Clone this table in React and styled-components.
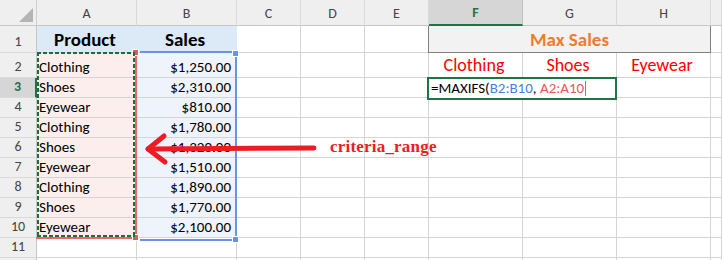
import styled, { createGlobalStyle } from "styled-components";

const GREEN = "#217346";
const GRID = "#d4d4d4";
const FONT = `Carlito, Calibri, Lato, "Liberation Sans", sans-serif`;

const GlobalStyle = createGlobalStyle`
  html, body { margin: 0; padding: 0; background: #fff; }
  body { font-family: ${FONT}; }
`;

const columns = ["A", "B", "C", "D", "E", "F", "G", "H", ""];

const data = [
  ["Clothing", "$1,250.00"],
  ["Shoes", "$2,310.00"],
  ["Eyewear", "$810.00"],
  ["Clothing", "$1,780.00"],
  ["Shoes", "$1,320.00"],
  ["Eyewear", "$1,510.00"],
  ["Clothing", "$1,890.00"],
  ["Shoes", "$1,770.00"],
  ["Eyewear", "$2,100.00"],
];

const App = () => (
  <>
    <GlobalStyle />
    <Sheet>
      <Corner>
        <CornerMark />
      </Corner>
      {columns.map((c, i) => (
        <ColHead key={i} selected={c === "F"}>
          {c}
        </ColHead>
      ))}

      {/* row 1 */}
      <RowHead>1</RowHead>
      <Cell fill="#dce9f6" bold size={19} align="center">
        Product
      </Cell>
      <Cell fill="#dce9f6" bold size={19} align="center">
        Sales
      </Cell>
      <Cell />
      <Cell />
      <Cell />
      <TitleCell>Max Sales</TitleCell>
      <Cell />

      {/* rows 2..10 */}
      {data.map(([product, sales], i) => {
        const row = i + 2;
        return [
          <RowHead key={`h${row}`} selected={row === 3}>
            {row}
          </RowHead>,
          <Cell key={`a${row}`} fill="#fdeeee">
            {product}
          </Cell>,
          <Cell key={`b${row}`} fill="#eef3fc" align="right">
            {sales}
          </Cell>,
          <Cell key={`c${row}`} />,
          <Cell key={`d${row}`} />,
          <Cell key={`e${row}`} />,
          ...(row === 2
            ? [
                <Cell key="f2" color="#ff0000" size={18} align="center">
                  Clothing
                </Cell>,
                <Cell key="g2" color="#ff0000" size={18} align="center">
                  Shoes
                </Cell>,
                <Cell key="h2" color="#ff0000" size={18} align="center">
                  Eyewear
                </Cell>,
              ]
            : row === 3
            ? [
                <Editor key="f3">
                  {"=MAXIFS("}
                  <Ref color="#4a7fe0">B2:B10</Ref>
                  {", "}
                  <Ref color="#e8585a">A2:A10</Ref>
                  <Caret />
                </Editor>,
                <Cell key="h3" />,
              ]
            : [<Cell key={`f${row}`} />, <Cell key={`g${row}`} />, <Cell key={`h${row}`} />]),
          <Cell key={`i${row}`} />,
        ];
      })}

      <RowHead>11</RowHead>
      {columns.map((c, i) => (
        <Cell key={`11-${i}`} />
      ))}
      <RowHead />
      {columns.map((c, i) => (
        <Cell key={`12-${i}`} />
      ))}

      {/* range highlights from the formula being edited */}
      <CriteriaRange>
        <Handle color="#e8585a" style={{ right: -4, top: -2 }} />
        <Handle color="#e8585a" style={{ right: -4, bottom: -4 }} />
        <MarchingAnts />
      </CriteriaRange>
      <SumRange>
        <Handle color="#6a93e6" style={{ right: -4, top: -3 }} />
        <Handle color="#6a93e6" style={{ right: -4, bottom: -4 }} />
      </SumRange>

      <Arrow width="180" height="40" viewBox="0 0 180 40">
        <g stroke="#ed1c24" strokeWidth="5" strokeLinecap="round" strokeLinejoin="round" fill="none">
          <path d="M174 20 L8 21" />
          <path d="M24 8 L8 21 L25 34" />
        </g>
      </Arrow>
      <Callout>criteria_range</Callout>
    </Sheet>
  </>
);

const Sheet = styled.div`
  position: relative;
  display: grid;
  grid-template-columns: 37px 100px 100px 64px 64px 64px 94px 94px 94px 1fr;
  grid-template-rows: 26px 27px 25px repeat(10, 20px);
  width: 722px;
  height: 260px;
  overflow: hidden;
  background: #fff;
  font-family: ${FONT};
`;

const Corner = styled.div`
  position: relative;
  background: #efefef;
  border-right: 1px solid #cfcfcf;
  border-bottom: 1px solid #c6c6c6;
`;

const CornerMark = styled.div`
  position: absolute;
  right: 3px;
  bottom: 3px;
  width: 0;
  height: 0;
  border-left: 14px solid transparent;
  border-bottom: 14px solid #b4b4b4;
`;

const ColHead = styled.div`
  display: flex;
  align-items: center;
  justify-content: center;
  box-sizing: border-box;
  background: ${({ selected }) => (selected ? "#d6d6d6" : "#efefef")};
  border-right: 1px solid ${({ selected }) => (selected ? "#c0c0c0" : "#dadada")};
  border-bottom: ${({ selected }) => (selected ? `2px solid ${GREEN}` : "1px solid #c6c6c6")};
  color: ${({ selected }) => (selected ? GREEN : "#444")};
  font-weight: ${({ selected }) => (selected ? 700 : 400)};
  font-size: 14px;
  padding-top: 1px;
`;

const RowHead = styled.div`
  display: flex;
  align-items: flex-end;
  justify-content: center;
  box-sizing: border-box;
  padding-bottom: 1px;
  background: ${({ selected }) => (selected ? "#d6d6d6" : "#efefef")};
  border-right: ${({ selected }) => (selected ? `2px solid ${GREEN}` : "1px solid #c6c6c6")};
  border-bottom: 1px solid #dadada;
  color: ${({ selected }) => (selected ? GREEN : "#444")};
  font-weight: ${({ selected }) => (selected ? 700 : 400)};
  font-size: 14px;
  line-height: 18px;
`;

const Cell = styled.div`
  display: flex;
  align-items: flex-end;
  justify-content: ${({ align }) =>
    align === "center" ? "center" : align === "right" ? "flex-end" : "flex-start"};
  box-sizing: border-box;
  padding: 0 5px 1px 2px;
  min-width: 0;
  white-space: nowrap;
  background: ${({ fill }) => fill || "#fff"};
  border-right: 1px solid ${({ fill }) => (fill === "#dce9f6" ? "#dce9f6" : GRID)};
  border-bottom: 1px solid ${GRID};
  color: ${({ color }) => color || "#000"};
  font-size: ${({ size }) => size || 15}px;
  font-weight: ${({ bold }) => (bold ? 700 : 400)};
  line-height: ${({ size }) => (size || 15) + 3}px;
`;

const TitleCell = styled.div`
  grid-column: span 3;
  display: flex;
  align-items: center;
  justify-content: center;
  box-sizing: border-box;
  background: #f2f2f2;
  border-right: 1px solid #808080;
  border-bottom: 1px solid #808080;
  box-shadow: -1px 0 0 #808080;
  color: #ed7d31;
  font-size: 19px;
  font-weight: 700;
  padding-top: 1px;
`;

const Editor = styled.div`
  grid-column: span 2;
  position: relative;
  z-index: 2;
  margin: -1px 0 -2px -2px;
  padding: 0 0 0 2px;
  border: 2px solid ${GREEN};
  background: #fff;
  font-size: 15px;
  line-height: 19px;
  color: #000;
  white-space: pre;
`;

const Ref = styled.span`
  color: ${({ color }) => color};
`;

const Caret = styled.span`
  display: inline-block;
  width: 1px;
  height: 15px;
  margin-left: 1px;
  vertical-align: -3px;
  background: #e8585a;
`;

const CriteriaRange = styled.div`
  position: absolute;
  left: 36px;
  top: 51px;
  width: 99px;
  height: 186px;
  border-right: 2px solid #e8666a;
  border-bottom: 2px solid #e8666a;
  pointer-events: none;
`;

const MarchingAnts = styled.div`
  position: absolute;
  left: 1px;
  top: 1px;
  right: 0;
  bottom: 0;
  background-image: repeating-linear-gradient(90deg, #1e6b3c 0 4px, transparent 4px 6px),
    repeating-linear-gradient(90deg, #1e6b3c 0 4px, transparent 4px 6px),
    repeating-linear-gradient(180deg, #1e6b3c 0 4px, transparent 4px 6px),
    repeating-linear-gradient(180deg, #1e6b3c 0 4px, transparent 4px 6px);
  background-size: 100% 2px, 100% 2px, 2px 100%, 2px 100%;
  background-position: top left, bottom left, top left, top right;
  background-repeat: no-repeat;
`;

const SumRange = styled.div`
  position: absolute;
  left: 140px;
  top: 51px;
  width: 95px;
  height: 186px;
  border-top: 2px solid #6a93e6;
  border-right: 2px solid #6a93e6;
  border-bottom: 2px solid #6a93e6;
  pointer-events: none;
`;

const Handle = styled.div`
  position: absolute;
  width: 5px;
  height: 5px;
  background: ${({ color }) => color};
  border: 1px solid #fff;
`;

const Arrow = styled.svg`
  position: absolute;
  left: 140px;
  top: 128px;
  z-index: 3;
`;

const Callout = styled.div`
  position: absolute;
  left: 330px;
  top: 137px;
  z-index: 3;
  color: #ed1c24;
  font-family: "Liberation Serif", "DejaVu Serif", serif;
  font-size: 17px;
  font-weight: 700;
  letter-spacing: 0.2px;
`;

export default App;
